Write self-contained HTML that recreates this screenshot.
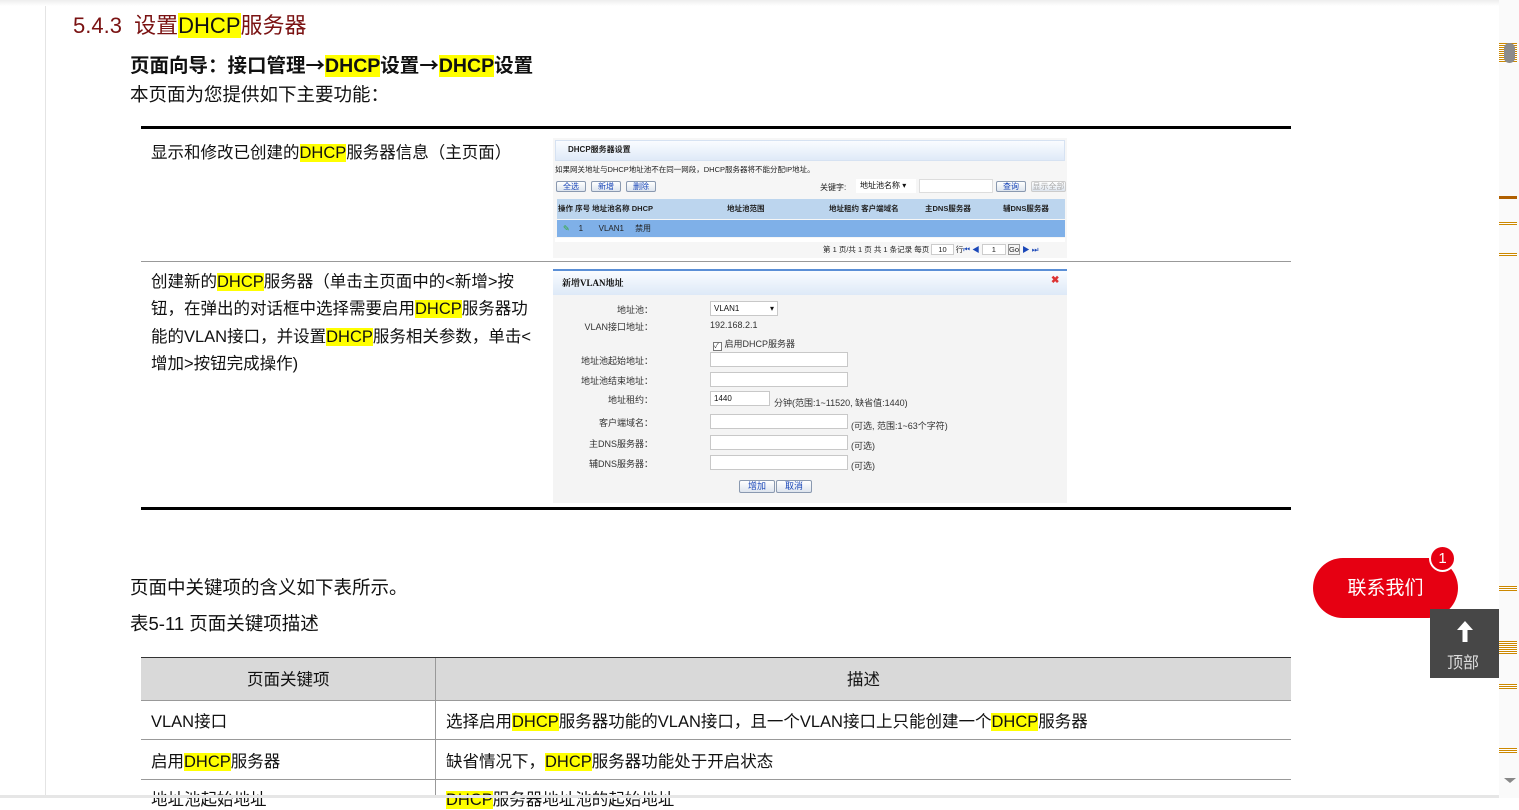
<!DOCTYPE html>
<html><head><meta charset="utf-8"><style>
*{margin:0;padding:0;box-sizing:border-box}
body{width:1519px;height:798px;overflow:hidden;background:#fff;font-family:"Liberation Sans","Noto Sans CJK SC",sans-serif;color:#111;position:relative}
.a{position:absolute;white-space:nowrap}
.h{background:#ffff00}
.ar{font-family:"Noto Sans CJK SC",sans-serif}
.s{font-size:8px;font-family:"Liberation Sans","Noto Sans CJK SC",sans-serif;color:#222}
.btn{position:absolute;height:11px;border:1px solid #8a99b0;background:linear-gradient(#fff,#dde4ee);font-size:8px;color:#1a47b8;text-align:center;line-height:9px;border-radius:2px}
.inp{position:absolute;height:15px;border:1px solid #c8c8c8;background:#fff;font-size:8px;line-height:13px;padding-left:3px}
.lbl{position:absolute;width:100px;text-align:right;font-size:9px;color:#333;left:0}
.mk{position:absolute;left:1499px;width:18px;background:repeating-linear-gradient(#c80 0 1px,#fff 1px 2px)}
</style></head><body>
<div class="a" style="left:45px;top:0;width:1px;height:798px;background:#e4e4e4"></div>
<div class="a" style="left:0;top:0;width:1499px;height:6px;background:linear-gradient(#eee,#fff)"></div>
<div class="a" style="left:73px;top:8px;font-size:22px;color:#7a1212">5.4.3&nbsp; 设置<span class="h" style="color:#111">DHCP</span>服务器</div>
<div class="a" style="left:130px;top:49px;font-size:19.5px;font-weight:bold">页面向导：接口管理<span class="ar">→</span><span class="h">DHCP</span>设置<span class="ar">→</span><span class="h">DHCP</span>设置</div>
<div class="a" style="left:130px;top:81px;font-size:18.5px">本页面为您提供如下主要功能：</div>

<div class="a" style="left:141px;top:126px;width:1150px;height:3px;background:#000"></div>
<div class="a" style="left:141px;top:261px;width:1150px;height:1px;background:#999"></div>
<div class="a" style="left:141px;top:507px;width:1150px;height:3px;background:#000"></div>
<div class="a" style="left:151px;top:139px;font-size:16.5px">显示和修改已创建的<span class="h">DHCP</span>服务器信息（主页面）</div>
<div class="a" style="left:151px;top:269px;font-size:16.5px;line-height:27.3px">创建新的<span class="h">DHCP</span>服务器（单击主页面中的&lt;新增&gt;按<br>钮，在弹出的对话框中选择需要启用<span class="h">DHCP</span>服务器功<br>能的VLAN接口，并设置<span class="h">DHCP</span>服务相关参数，单击&lt;<br>增加&gt;按钮完成操作)</div>

<!-- screenshot 1 -->
<div class="a" style="left:553px;top:138px;width:514px;height:120px;background:#f6f6f6">
 <div class="a" style="left:2px;top:2px;width:510px;height:21px;background:linear-gradient(#fafcff,#dfeaf8);border:1px solid #d6e2f2"></div>
 <div class="a s" style="left:15px;top:6px;font-weight:bold">DHCP服务器设置</div>
 <div class="a s" style="left:2px;top:26px;font-size:7.5px">如果网关地址与DHCP地址池不在同一网段，DHCP服务器将不能分配IP地址。</div>
 <div class="btn" style="left:3px;top:43px;width:30px">全选</div>
 <div class="btn" style="left:38px;top:43px;width:30px">新增</div>
 <div class="btn" style="left:73px;top:43px;width:30px">删除</div>
 <div class="a s" style="left:267px;top:44px">关键字:</div>
 <div class="a" style="left:303px;top:41px;width:60px;height:14px;background:#fff;font-size:8px;padding-left:4px;line-height:13px">地址池名称 ▾</div>
 <div class="a" style="left:366px;top:41px;width:74px;height:14px;background:#fff;border:1px solid #ddd"></div>
 <div class="btn" style="left:443px;top:43px;width:30px">查询</div>
 <div class="btn" style="left:478px;top:43px;width:35px;color:#aaa;border-color:#ccc">显示全部</div>
 <div class="a" style="left:4px;top:61px;width:508px;height:20px;background:#bcd5ee"></div>
 <div class="a s" style="left:5px;top:65px;font-weight:bold;font-size:7.5px">操作 序号 地址池名称 DHCP</div>
 <div class="a s" style="left:174px;top:65px;font-weight:bold;font-size:7.5px">地址池范围</div>
 <div class="a s" style="left:276px;top:65px;font-weight:bold;font-size:7.5px">地址租约 客户端域名</div>
 <div class="a s" style="left:372px;top:65px;font-weight:bold;font-size:7.5px">主DNS服务器</div>
 <div class="a s" style="left:450px;top:65px;font-weight:bold;font-size:7.5px">辅DNS服务器</div>
 <div class="a" style="left:4px;top:82px;width:508px;height:17px;background:#7fb0e8"></div>
 <div class="a s" style="left:10px;top:85px"><span style="color:#3a3">✎</span>&nbsp;&nbsp;&nbsp;&nbsp;1&nbsp;&nbsp;&nbsp;&nbsp;&nbsp;&nbsp;&nbsp;VLAN1&nbsp;&nbsp;&nbsp;&nbsp;&nbsp;禁用</div>
 <div class="a" style="left:2px;top:100px;width:510px;height:4px;background:#fff"></div>
 <div class="a s" style="left:270px;top:106px;font-size:7.5px">第 1 页/共 1 页 共 1 条记录 每页 <span style="background:#fff;border:1px solid #ccc;padding:0 6px">10</span> 行<span style="color:#1a47b8">⏮ ◀</span> <span style="background:#fff;border:1px solid #ccc;padding:0 9px">1</span> <span style="border:1px solid #999">Go</span> <span style="color:#1a47b8">▶ ⏭</span></div>
</div>

<!-- screenshot 2 -->
<div class="a" style="left:553px;top:269px;width:514px;height:234px;background:#f4f4f4">
 <div class="a" style="left:0;top:0;width:514px;height:2px;background:#5b8fd6"></div>
 <div class="a" style="left:0;top:2px;width:514px;height:24px;background:linear-gradient(#fafcff,#dde9f7)"></div>
 <div class="a" style="left:9px;top:7px;font-size:9px;font-weight:bold;font-family:'Liberation Serif','Noto Serif CJK SC',serif">新增VLAN地址</div>
 <div class="a" style="left:498px;top:6px;font-size:10px;color:#d33;font-weight:bold">✖</div>
 <div class="lbl" style="top:34px">地址池：</div>
 <div class="inp" style="left:157px;top:32px;width:68px">VLAN1 <span style="float:right;margin-right:3px">▾</span></div>
 <div class="lbl" style="top:51px">VLAN接口地址：</div>
 <div class="a" style="left:157px;top:51px;font-size:9px;color:#333">192.168.2.1</div>
 <div class="a" style="left:160px;top:68px;font-size:9px;color:#333"><span style="display:inline-block;width:9px;height:9px;border:1px solid #777;background:#fff;font-size:7px;line-height:8px;vertical-align:-1px">✓</span> 启用DHCP服务器</div>
 <div class="lbl" style="top:85px">地址池起始地址：</div>
 <div class="inp" style="left:157px;top:83px;width:138px"></div>
 <div class="lbl" style="top:105px">地址池结束地址：</div>
 <div class="inp" style="left:157px;top:103px;width:138px"></div>
 <div class="lbl" style="top:124px">地址租约：</div>
 <div class="inp" style="left:157px;top:122px;width:60px">1440</div>
 <div class="a" style="left:221px;top:127px;font-size:9px;color:#333">分钟(范围:1~11520, 缺省值:1440)</div>
 <div class="lbl" style="top:147px">客户端域名：</div>
 <div class="inp" style="left:157px;top:145px;width:138px"></div>
 <div class="a" style="left:298px;top:150px;font-size:9px;color:#333">(可选, 范围:1~63个字符)</div>
 <div class="lbl" style="top:168px">主DNS服务器：</div>
 <div class="inp" style="left:157px;top:166px;width:138px"></div>
 <div class="a" style="left:298px;top:170px;font-size:9px;color:#333">(可选)</div>
 <div class="lbl" style="top:188px">辅DNS服务器：</div>
 <div class="inp" style="left:157px;top:186px;width:138px"></div>
 <div class="a" style="left:298px;top:190px;font-size:9px;color:#333">(可选)</div>
 <div class="btn" style="left:186px;top:211px;width:36px;height:13px;line-height:11px;font-size:9px">增加</div>
 <div class="btn" style="left:223px;top:211px;width:36px;height:13px;line-height:11px;font-size:9px">取消</div>
</div>

<div class="a" style="left:130px;top:574px;font-size:18.5px">页面中关键项的含义如下表所示。</div>
<div class="a" style="left:130px;top:610px;font-size:18.5px">表5-11 页面关键项描述</div>

<div class="a" style="left:141px;top:657px;width:1150px;height:1px;background:#333"></div>
<div class="a" style="left:141px;top:658px;width:1150px;height:42px;background:#d9d9d9"></div>
<div class="a" style="left:141px;top:700px;width:1150px;height:1px;background:#999"></div>
<div class="a" style="left:141px;top:739px;width:1150px;height:1px;background:#999"></div>
<div class="a" style="left:141px;top:779px;width:1150px;height:1px;background:#999"></div>
<div class="a" style="left:435px;top:658px;width:1px;height:140px;background:#999"></div>
<div class="a" style="left:247px;top:666px;font-size:16.5px">页面关键项</div>
<div class="a" style="left:847px;top:666px;font-size:16.5px">描述</div>
<div class="a" style="left:151px;top:708px;font-size:16.5px">VLAN接口</div>
<div class="a" style="left:446px;top:708px;font-size:16.5px">选择启用<span class="h">DHCP</span>服务器功能的VLAN接口，且一个VLAN接口上只能创建一个<span class="h">DHCP</span>服务器</div>
<div class="a" style="left:151px;top:748px;font-size:16.5px">启用<span class="h">DHCP</span>服务器</div>
<div class="a" style="left:446px;top:748px;font-size:16.5px">缺省情况下，<span class="h">DHCP</span>服务器功能处于开启状态</div>
<div class="a" style="left:151px;top:786px;font-size:16.5px">地址池起始地址</div>
<div class="a" style="left:446px;top:786px;font-size:16.5px"><span class="h">DHCP</span>服务器地址池的起始地址</div>
<div class="a" style="left:0;top:795px;width:1519px;height:3px;background:#e6e6e6"></div>

<!-- scrollbar -->
<div class="a" style="left:1499px;top:0;width:20px;height:798px;background:#fafafa"></div>
<div class="mk" style="top:43px;height:20px"></div>
<div class="a" style="left:1504px;top:43px;width:11px;height:20px;border-radius:5px;background:#8c8c8c"></div>
<div class="a" style="left:1499px;top:196px;width:18px;height:3px;background:#b06000"></div>
<div class="mk" style="top:222px;height:3px"></div>
<div class="mk" style="top:253px;height:3px"></div>
<div class="mk" style="top:586px;height:5px"></div>
<div class="mk" style="top:641px;height:13px"></div>
<div class="mk" style="top:684px;height:5px"></div>
<div class="mk" style="top:748px;height:5px"></div>
<div class="a" style="left:1504px;top:778px;width:0;height:0;border-left:6px solid transparent;border-right:6px solid transparent;border-top:5px solid #888"></div>

<!-- contact button -->
<div class="a" style="left:1313px;top:558px;width:145px;height:60px;border-radius:30px;background:#e60012;color:#fff;font-size:19px;text-align:center;line-height:62px">联系我们</div>
<div class="a" style="left:1429px;top:545px;width:27px;height:27px;border-radius:50%;background:#e60012;border:2px solid #fff;color:#fff;font-size:15px;text-align:center;line-height:23px">1</div>
<div class="a" style="left:1430px;top:609px;width:69px;height:69px;background:#474747;color:#ddd;text-align:center">
 <svg width="20" height="24" viewBox="0 0 20 24" style="position:absolute;left:25px;top:10px"><path d="M10 2 L18 11 H12.5 V23 H7.5 V11 H2 Z" fill="#fff"/></svg>
 <div class="a" style="left:17px;top:40px;font-size:16px;color:#ddd">顶部</div>
</div>
</body></html>
